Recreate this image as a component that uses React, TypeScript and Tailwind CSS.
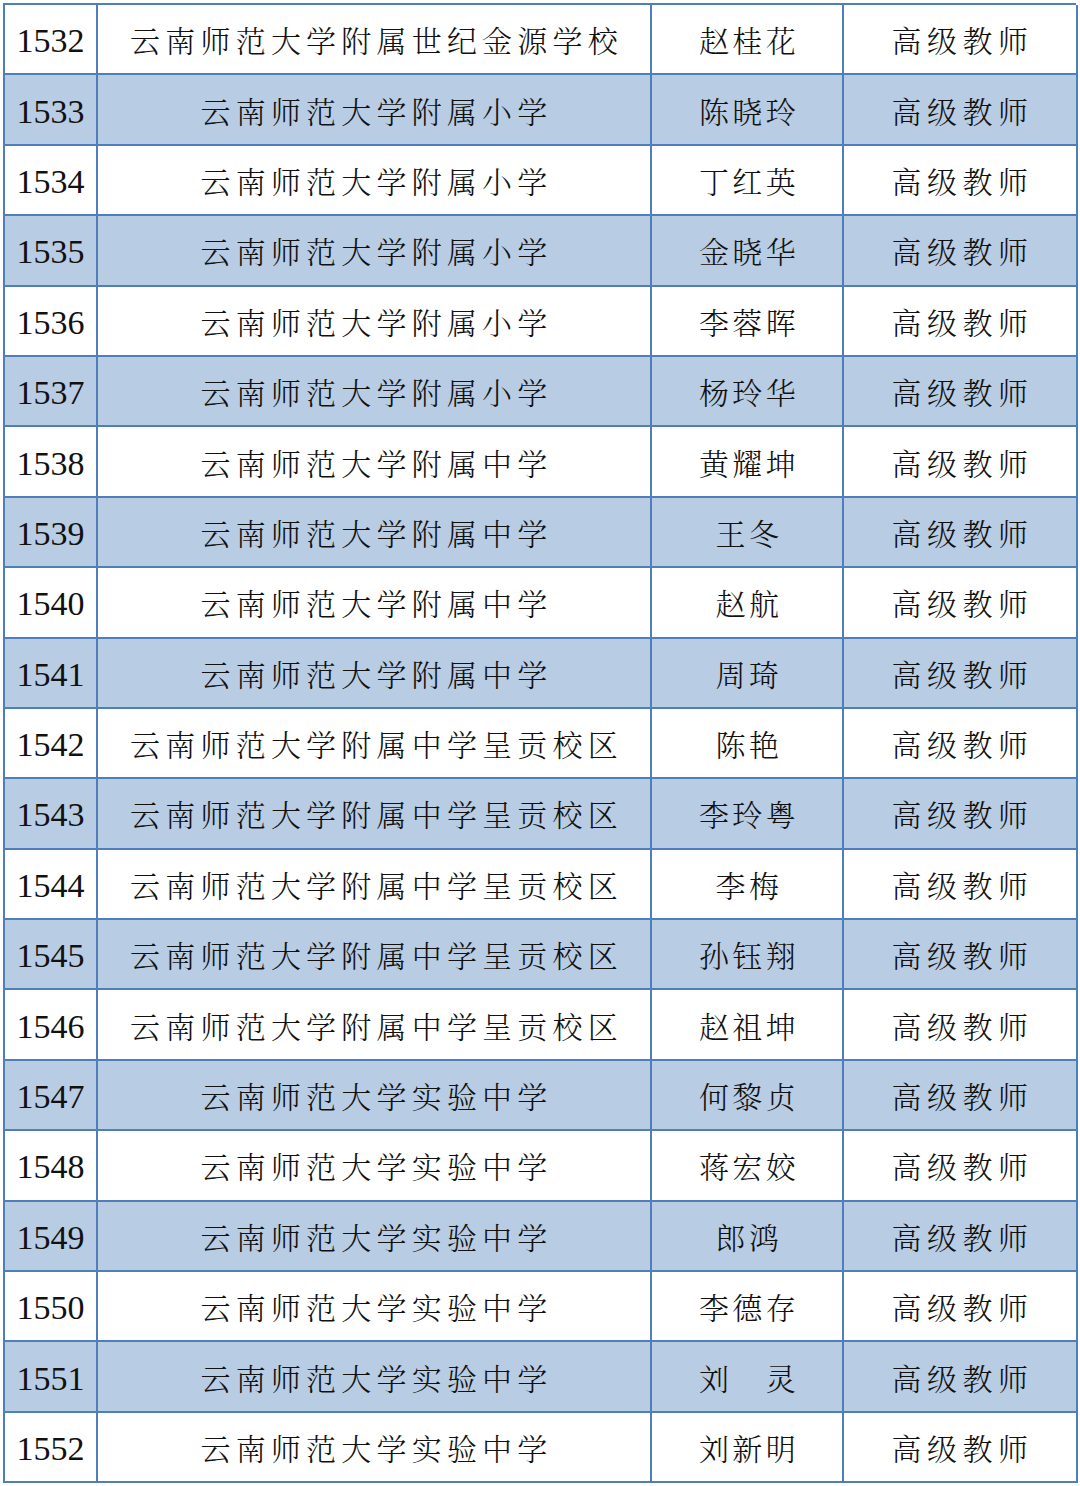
const rows: [string, string, string][] = [
  ["1532", "云南师范大学附属世纪金源学校", "赵桂花"],
  ["1533", "云南师范大学附属小学", "陈晓玲"],
  ["1534", "云南师范大学附属小学", "丁红英"],
  ["1535", "云南师范大学附属小学", "金晓华"],
  ["1536", "云南师范大学附属小学", "李蓉晖"],
  ["1537", "云南师范大学附属小学", "杨玲华"],
  ["1538", "云南师范大学附属中学", "黄耀坤"],
  ["1539", "云南师范大学附属中学", "王冬"],
  ["1540", "云南师范大学附属中学", "赵航"],
  ["1541", "云南师范大学附属中学", "周琦"],
  ["1542", "云南师范大学附属中学呈贡校区", "陈艳"],
  ["1543", "云南师范大学附属中学呈贡校区", "李玲粤"],
  ["1544", "云南师范大学附属中学呈贡校区", "李梅"],
  ["1545", "云南师范大学附属中学呈贡校区", "孙钰翔"],
  ["1546", "云南师范大学附属中学呈贡校区", "赵祖坤"],
  ["1547", "云南师范大学实验中学", "何黎贞"],
  ["1548", "云南师范大学实验中学", "蒋宏姣"],
  ["1549", "云南师范大学实验中学", "郎鸿"],
  ["1550", "云南师范大学实验中学", "李德存"],
  ["1551", "云南师范大学实验中学", "刘\u3000灵"],
  ["1552", "云南师范大学实验中学", "刘新明"],
];

const cjk = "font-['Noto_Serif_CJK_SC','Noto_Sans_CJK_SC',sans-serif] font-light";

export default function App() {
  return (
    <div className="min-h-[1486px] w-[1080px] bg-white pl-[3px] pt-[3px] text-[#111]">
      <div className="grid w-[1073px] grid-cols-[93px_554px_192px_234px] border-l-2 border-t-2 border-[#4f7fbb]">
        {rows.map(([no, school, name], i) => {
          const bg = i % 2 === 1 ? "bg-[#b8cce4]" : "bg-white";
          const cell = `flex h-[70.4px] items-center justify-center border-b-2 border-r-2 border-[#4f7fbb] ${bg}`;
          return (
            <div key={no} className="contents">
              <div className={`${cell} pt-[4px] font-['Liberation_Serif',serif] text-[34px] leading-none`}>{no}</div>
              <div className={`${cell} ${cjk} pl-[5px] text-[30px] leading-none tracking-[5.2px]`}>{school}</div>
              <div className={`${cell} ${cjk} pl-[4px] text-[30px] leading-none tracking-[3.4px]`}>{name}</div>
              <div className={`${cell} ${cjk} pl-[5px] text-[30px] leading-none tracking-[5.5px]`}>高级教师</div>
            </div>
          );
        })}
      </div>
    </div>
  );
}
